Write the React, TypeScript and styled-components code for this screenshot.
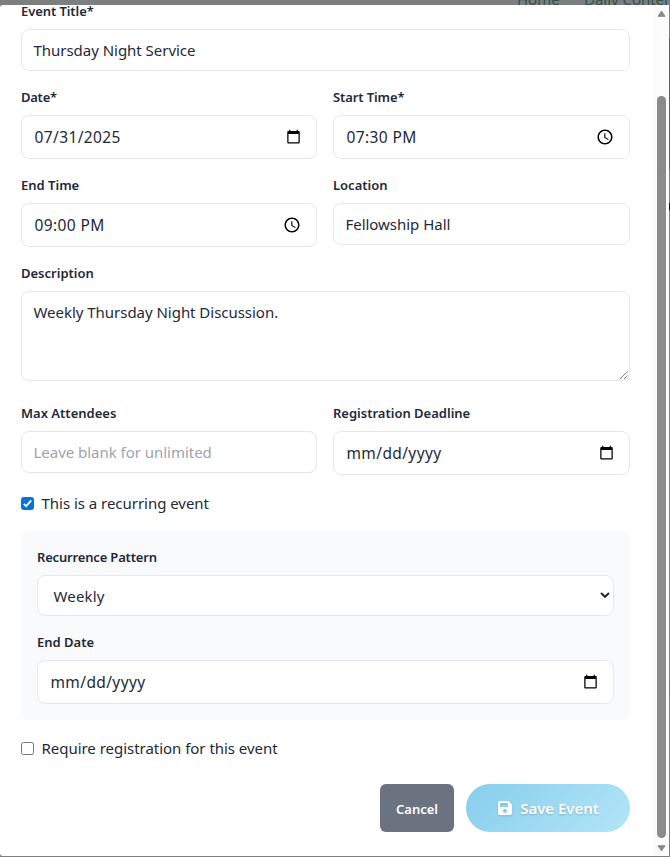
import React from 'react';
import styled, { createGlobalStyle, css } from 'styled-components';
import { FaFloppyDisk } from 'react-icons/fa6';

const GlobalStyle = createGlobalStyle`
  *, *::before, *::after { box-sizing: border-box; }
  body {
    margin: 0;
    overflow: hidden;
    background: #808080;
    color: #1f2937;
    font-family: 'Noto Sans', 'Open Sans', sans-serif;
    font-size: 15px;
    letter-spacing: -0.03px;
  }
`;

const Page = styled.div`
  display: flex;
  flex-direction: column;
  width: 670px;
  height: 857px;
  overflow: hidden;
`;

const SiteHeader = styled.header`
  display: flex;
  flex: none;
  align-items: flex-end;
  justify-content: flex-end;
  gap: 25px;
  height: 5px;
  overflow: hidden;
  background: #7b7f80;
  color: #34504d;
  line-height: 20px;
  white-space: nowrap;
`;

const NavItem = styled.span<{ $width: number }>`
  flex: none;
  width: ${(p) => p.$width}px;
  height: 20px;
  margin-bottom: -4px;
`;

const Main = styled.div`
  display: flex;
  height: 851px;
`;

const Modal = styled.section`
  display: flex;
  width: 669px;
  height: 851px;
  overflow: hidden;
  background: #fff;
  border-radius: 3px 0 0 3px;
`;

const Form = styled.form`
  display: flex;
  flex: none;
  flex-direction: column;
  gap: 16px;
  width: 609px;
  margin: -4px 24px 0 21px;
`;

const FieldRow = styled.div`
  display: grid;
  grid-template-columns: 296px 297px;
  gap: 16px;
  align-items: start;
`;

const Field = styled.div`
  display: flex;
  flex-direction: column;
  gap: 8px;
`;

const Label = styled.label<{ $spacing?: number }>`
  height: 20px;
  font-size: 13px;
  font-weight: 600;
  line-height: 20px;
  letter-spacing: ${(p) => p.$spacing ?? 0}px;
`;

const controlBox = css`
  background: #fff;
  border: 1px solid #e5e7eb;
  border-radius: 8px;
`;

const TextBox = styled.div<{ $muted?: boolean }>`
  ${controlBox}
  height: 42px;
  padding: 0 11.5px;
  color: ${(p) => (p.$muted ? '#9ca3af' : 'inherit')};
  line-height: 41px;
`;

const PickerBox = styled.div`
  ${controlBox}
  display: flex;
  align-items: center;
  justify-content: space-between;
  height: 44px;
  padding: 0 15px 0 12.5px;
  font-size: 15.5px;
  letter-spacing: 0.38px;

  svg { margin-bottom: 1px; }
`;

const SelectBox = styled.div`
  ${controlBox}
  display: flex;
  align-items: center;
  justify-content: space-between;
  height: 41px;
  padding: 0 3px 0 15.5px;
  letter-spacing: 0.15px;
`;

const TextArea = styled.div`
  ${controlBox}
  display: flex;
  justify-content: space-between;
  height: 90px;
  margin-bottom: 6px;
  padding: 9px 0 0 11.5px;
  line-height: 22px;
`;

const Grip = styled.svg`
  align-self: flex-end;
  margin: 0 1px 1px 0;
`;

const CheckRow = styled.div`
  display: flex;
  align-items: center;
  gap: 7.5px;
  height: 24px;
  line-height: 24px;
`;

const CheckBox = styled.span<{ $checked?: boolean }>`
  display: flex;
  width: 13px;
  height: 13px;
  background: ${(p) => (p.$checked ? '#0075d7' : '#fff')};
  border: 1px solid ${(p) => (p.$checked ? '#0075d7' : '#767676')};
  border-radius: 2.5px;
`;

const Recurrence = styled.div`
  display: flex;
  flex-direction: column;
  gap: 16px;
  padding: 16px;
  background: #f9fafb;
  border-radius: 8px;
`;

const Actions = styled.div`
  display: flex;
  justify-content: flex-end;
  gap: 12px;
  height: 48px;
  margin-top: 8px;
`;

const actionButton = css`
  display: flex;
  align-items: center;
  justify-content: center;
  height: 48px;
  padding: 0;
  border: 0;
  color: #fff;
  font-family: inherit;
  font-weight: 600;
`;

const CancelButton = styled.button`
  ${actionButton}
  width: 74px;
  padding-top: 2px;
  background: #6b7280;
  border-radius: 6px;
  font-size: 13px;
`;

const SaveButton = styled.button`
  ${actionButton}
  gap: 7px;
  width: 164px;
  background: linear-gradient(135deg, #87ceeb 0%, #b3e5f8 100%);
  border-radius: 24px;
  font-size: 15px;
  letter-spacing: -0.05px;
  text-shadow: 0 1px 2px rgba(0, 0, 0, 0.2);

  svg { filter: drop-shadow(0 1px 1px rgba(0, 0, 0, 0.12)); }
`;

const Scrollbar = styled.div`
  display: flex;
  flex: none;
  flex-direction: column;
  align-items: center;
  justify-content: space-between;
  width: 15px;
  height: 851px;
  padding: 5px 0 4px;
  background: #fcfcfc;
`;

const Thumb = styled.div`
  width: 9px;
  height: 742px;
  margin-top: 72px;
  background: #8b8b8b;
  border-radius: 4.5px;
`;

const EdgeStrip = styled.div`
  display: flex;
  flex-direction: column;
  width: 1px;
`;

const EdgeBand = styled.div<{ $height: number; $color: string }>`
  flex: none;
  height: ${(p) => p.$height}px;
  background: ${(p) => p.$color};
`;

const edgeBands: [number, string][] = [
  [33, '#808080'],
  [132, '#496b71'],
  [33, '#808080'],
  [7, '#111'],
  [470, '#808080'],
  [16, '#697988'],
  [160, '#808080'],
];

const CalendarIcon = () => (
  <svg width="15" height="15" viewBox="0 0 24 24" fill="#000">
    <path d="M20 3h-1V1h-2v2H7V1H5v2H4c-1.1 0-2 .9-2 2v16c0 1.1.9 2 2 2h16c1.1 0 2-.9 2-2V5c0-1.1-.9-2-2-2zm0 18H4V8h16v13z" />
  </svg>
);

const ClockIcon = () => (
  <svg width="18" height="18" viewBox="0 0 24 24" fill="#000">
    <path d="M11.99 2C6.47 2 2 6.48 2 12s4.47 10 9.99 10C17.52 22 22 17.52 22 12S17.52 2 11.99 2zM12 20c-4.42 0-8-3.58-8-8s3.58-8 8-8 8 3.58 8 8-3.58 8-8 8zm.5-13H11v6l5.25 3.15.75-1.23-4.5-2.67z" />
  </svg>
);

const Arrow = ({ d }: { d: string }) => (
  <svg width="9" height="7" viewBox="0 0 9 7">
    <path d={d} fill="#8b8b8b" stroke="#8b8b8b" strokeLinejoin="round" />
  </svg>
);

export default function App() {
  return (
    <>
      <GlobalStyle />
      <Page>
        <SiteHeader>
          <NavItem $width={42}>Home</NavItem>
          <NavItem $width={86}>Daily Content</NavItem>
        </SiteHeader>
        <Main>
          <Modal>
            <Form>
              <Field>
                <Label $spacing={-0.08}>Event Title*</Label>
                <TextBox>Thursday Night Service</TextBox>
              </Field>
              <FieldRow>
                <Field>
                  <Label $spacing={-0.25}>Date*</Label>
                  <PickerBox>07/31/2025<CalendarIcon /></PickerBox>
                </Field>
                <Field>
                  <Label $spacing={-0.1}>Start Time*</Label>
                  <PickerBox>07:30 PM<ClockIcon /></PickerBox>
                </Field>
              </FieldRow>
              <FieldRow>
                <Field>
                  <Label>End Time</Label>
                  <PickerBox>09:00 PM<ClockIcon /></PickerBox>
                </Field>
                <Field>
                  <Label>Location</Label>
                  <TextBox>Fellowship Hall</TextBox>
                </Field>
              </FieldRow>
              <Field>
                <Label>Description</Label>
                <TextArea>
                  Weekly Thursday Night Discussion.
                  <Grip width="8" height="8" viewBox="0 0 8 8" stroke="#333" strokeWidth="1">
                    <path d="M0.3 7.7L7.7 0.3M4.3 7.7L7.7 4.3" strokeDasharray="1.1 0.4" />
                  </Grip>
                </TextArea>
              </Field>
              <FieldRow>
                <Field>
                  <Label>Max Attendees</Label>
                  <TextBox $muted>Leave blank for unlimited</TextBox>
                </Field>
                <Field>
                  <Label>Registration Deadline</Label>
                  <PickerBox>mm/dd/yyyy<CalendarIcon /></PickerBox>
                </Field>
              </FieldRow>
              <CheckRow>
                <CheckBox $checked>
                  <svg width="11" height="11" viewBox="0 0 11 11" fill="none">
                    <path d="M1.8 5.9L4.2 8.2L9.2 2.4" stroke="#fff" strokeWidth="1.8" />
                  </svg>
                </CheckBox>
                This is a recurring event
              </CheckRow>
              <Recurrence>
                <Field>
                  <Label $spacing={-0.17}>Recurrence Pattern</Label>
                  <SelectBox>
                    Weekly
                    <svg width="10" height="7" viewBox="0 0 10 7" fill="none">
                      <path d="M1 1L5 4.8L9 1" stroke="#1f2937" strokeWidth="2" />
                    </svg>
                  </SelectBox>
                </Field>
                <Field>
                  <Label>End Date</Label>
                  <PickerBox>mm/dd/yyyy<CalendarIcon /></PickerBox>
                </Field>
              </Recurrence>
              <CheckRow>
                <CheckBox />
                Require registration for this event
              </CheckRow>
              <Actions>
                <CancelButton type="button">Cancel</CancelButton>
                <SaveButton type="button">
                  <FaFloppyDisk size={16} />
                  Save Event
                </SaveButton>
              </Actions>
            </Form>
            <Scrollbar>
              <Arrow d="M4.5 1L8 6.3H1z" />
              <Thumb />
              <Arrow d="M4.5 6L8 0.7H1z" />
            </Scrollbar>
          </Modal>
          <EdgeStrip>
            {edgeBands.map(([height, color], i) => (
              <EdgeBand key={i} $height={height} $color={color} />
            ))}
          </EdgeStrip>
        </Main>
      </Page>
    </>
  );
}
